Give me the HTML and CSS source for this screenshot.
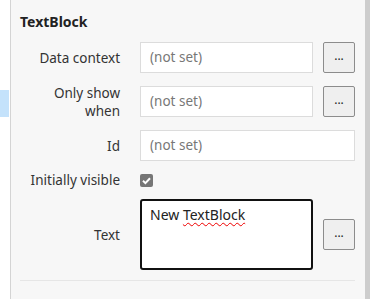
FILE: index.html
```html
<!DOCTYPE html>
<html>
<head>
<meta charset="utf-8">
<link rel="stylesheet" href="styles.css">
</head>
<body>
<div class="app">
  <div class="side">
    <div class="side-sel"></div>
  </div>
  <div class="panel">
    <section class="section">
      <h2 class="section-title">TextBlock</h2>
      <div class="rows">
        <div class="row row-field">
          <label class="label">Data context</label>
          <div class="field">(not set)</div>
          <button class="more">...</button>
        </div>
        <div class="row row-field">
          <label class="label">Only show when</label>
          <div class="field">(not set)</div>
          <button class="more">...</button>
        </div>
        <div class="row row-field">
          <label class="label">Id</label>
          <div class="field field-wide">(not set)</div>
        </div>
        <div class="row row-check">
          <label class="label">Initially visible</label>
          <span class="check">
            <svg width="13" height="13" viewBox="0 0 13 13"><path d="M3 6.8 L5.4 9.1 L10 4.2" fill="none" stroke="#fff" stroke-width="2"/></svg>
          </span>
        </div>
        <div class="row">
          <label class="label">Text</label>
          <div class="area">New <span class="spell">TextBlock</span></div>
          <button class="more">...</button>
        </div>
      </div>
    </section>
    <section class="section section-next">
      <h2 class="section-title">Layout</h2>
    </section>
  </div>
  <div class="scrollbar"></div>
</div>
</body>
</html>
```
FILE: styles.css
```css
html, body {
  margin: 0;
  padding: 0;
  height: 100%;
  overflow: hidden;
}
body {
  font-family: "Noto Sans", "Open Sans", sans-serif;
  font-size: 13.5px;
  color: #333;
  background: #fff;
}
.app {
  display: flex;
  height: 299px;
}
.side {
  width: 10px;
  background: #fff;
  border-right: 1px solid #d4d4d4;
  padding-top: 90px;
}
.side-sel {
  width: 9px;
  height: 27px;
  background: #c4e2fb;
}
.panel {
  flex: 1;
  background: #f7f7f7;
  padding: 0 10px 0 9px;
  overflow: hidden;
}
.section {
  padding-top: 13px;
  padding-bottom: 10px;
  border-bottom: 1px solid #e6e6e6;
}
.section-next {
  border-bottom: none;
  padding-top: 14px;
}
.section-title {
  margin: 0;
  font-size: 14px;
  font-weight: 700;
  color: #222;
  line-height: 18px;
}
.rows {
  display: flex;
  flex-direction: column;
  gap: 13px;
  margin-top: 11px;
}
.row {
  display: flex;
  align-items: center;
}
.row-field {
  height: 31px;
}
.row-check {
  height: 18px;
  margin: -3px 0;
}
.label {
  width: 100px;
  flex: none;
  margin-right: 20px;
  text-align: right;
  line-height: 18px;
  color: #333;
}
.field {
  width: 173px;
  height: 31px;
  box-sizing: border-box;
  border: 1px solid #dcdcdc;
  background: #fff;
  color: #777;
  padding: 0 9px;
  line-height: 29px;
}
.field-wide {
  width: 215px;
}
.more {
  margin-left: 10px;
  width: 32px;
  height: 31px;
  box-sizing: border-box;
  border: 1px solid #8c8c8c;
  border-radius: 2px;
  background: #efefef;
  font-family: "Noto Sans", sans-serif;
  font-size: 12px;
  font-weight: 400;
  color: #222;
  padding: 0 0 3px;
  line-height: 12px;
}
.check {
  width: 13px;
  height: 13px;
  border-radius: 2px;
  background: #767676;
  display: block;
}
.check svg {
  display: block;
}
.area {
  width: 173px;
  height: 71px;
  box-sizing: border-box;
  border: 2px solid #111;
  border-radius: 3px;
  background: #fff;
  color: #222;
  padding: 4px 8px;
  line-height: 20px;
  font-size: 14px;
}
.spell {
  text-decoration: underline wavy #e00;
  text-decoration-thickness: 1px;
  text-underline-offset: 2px;
}
.scrollbar {
  width: 5px;
  background: #cdcdcd;
}
```
